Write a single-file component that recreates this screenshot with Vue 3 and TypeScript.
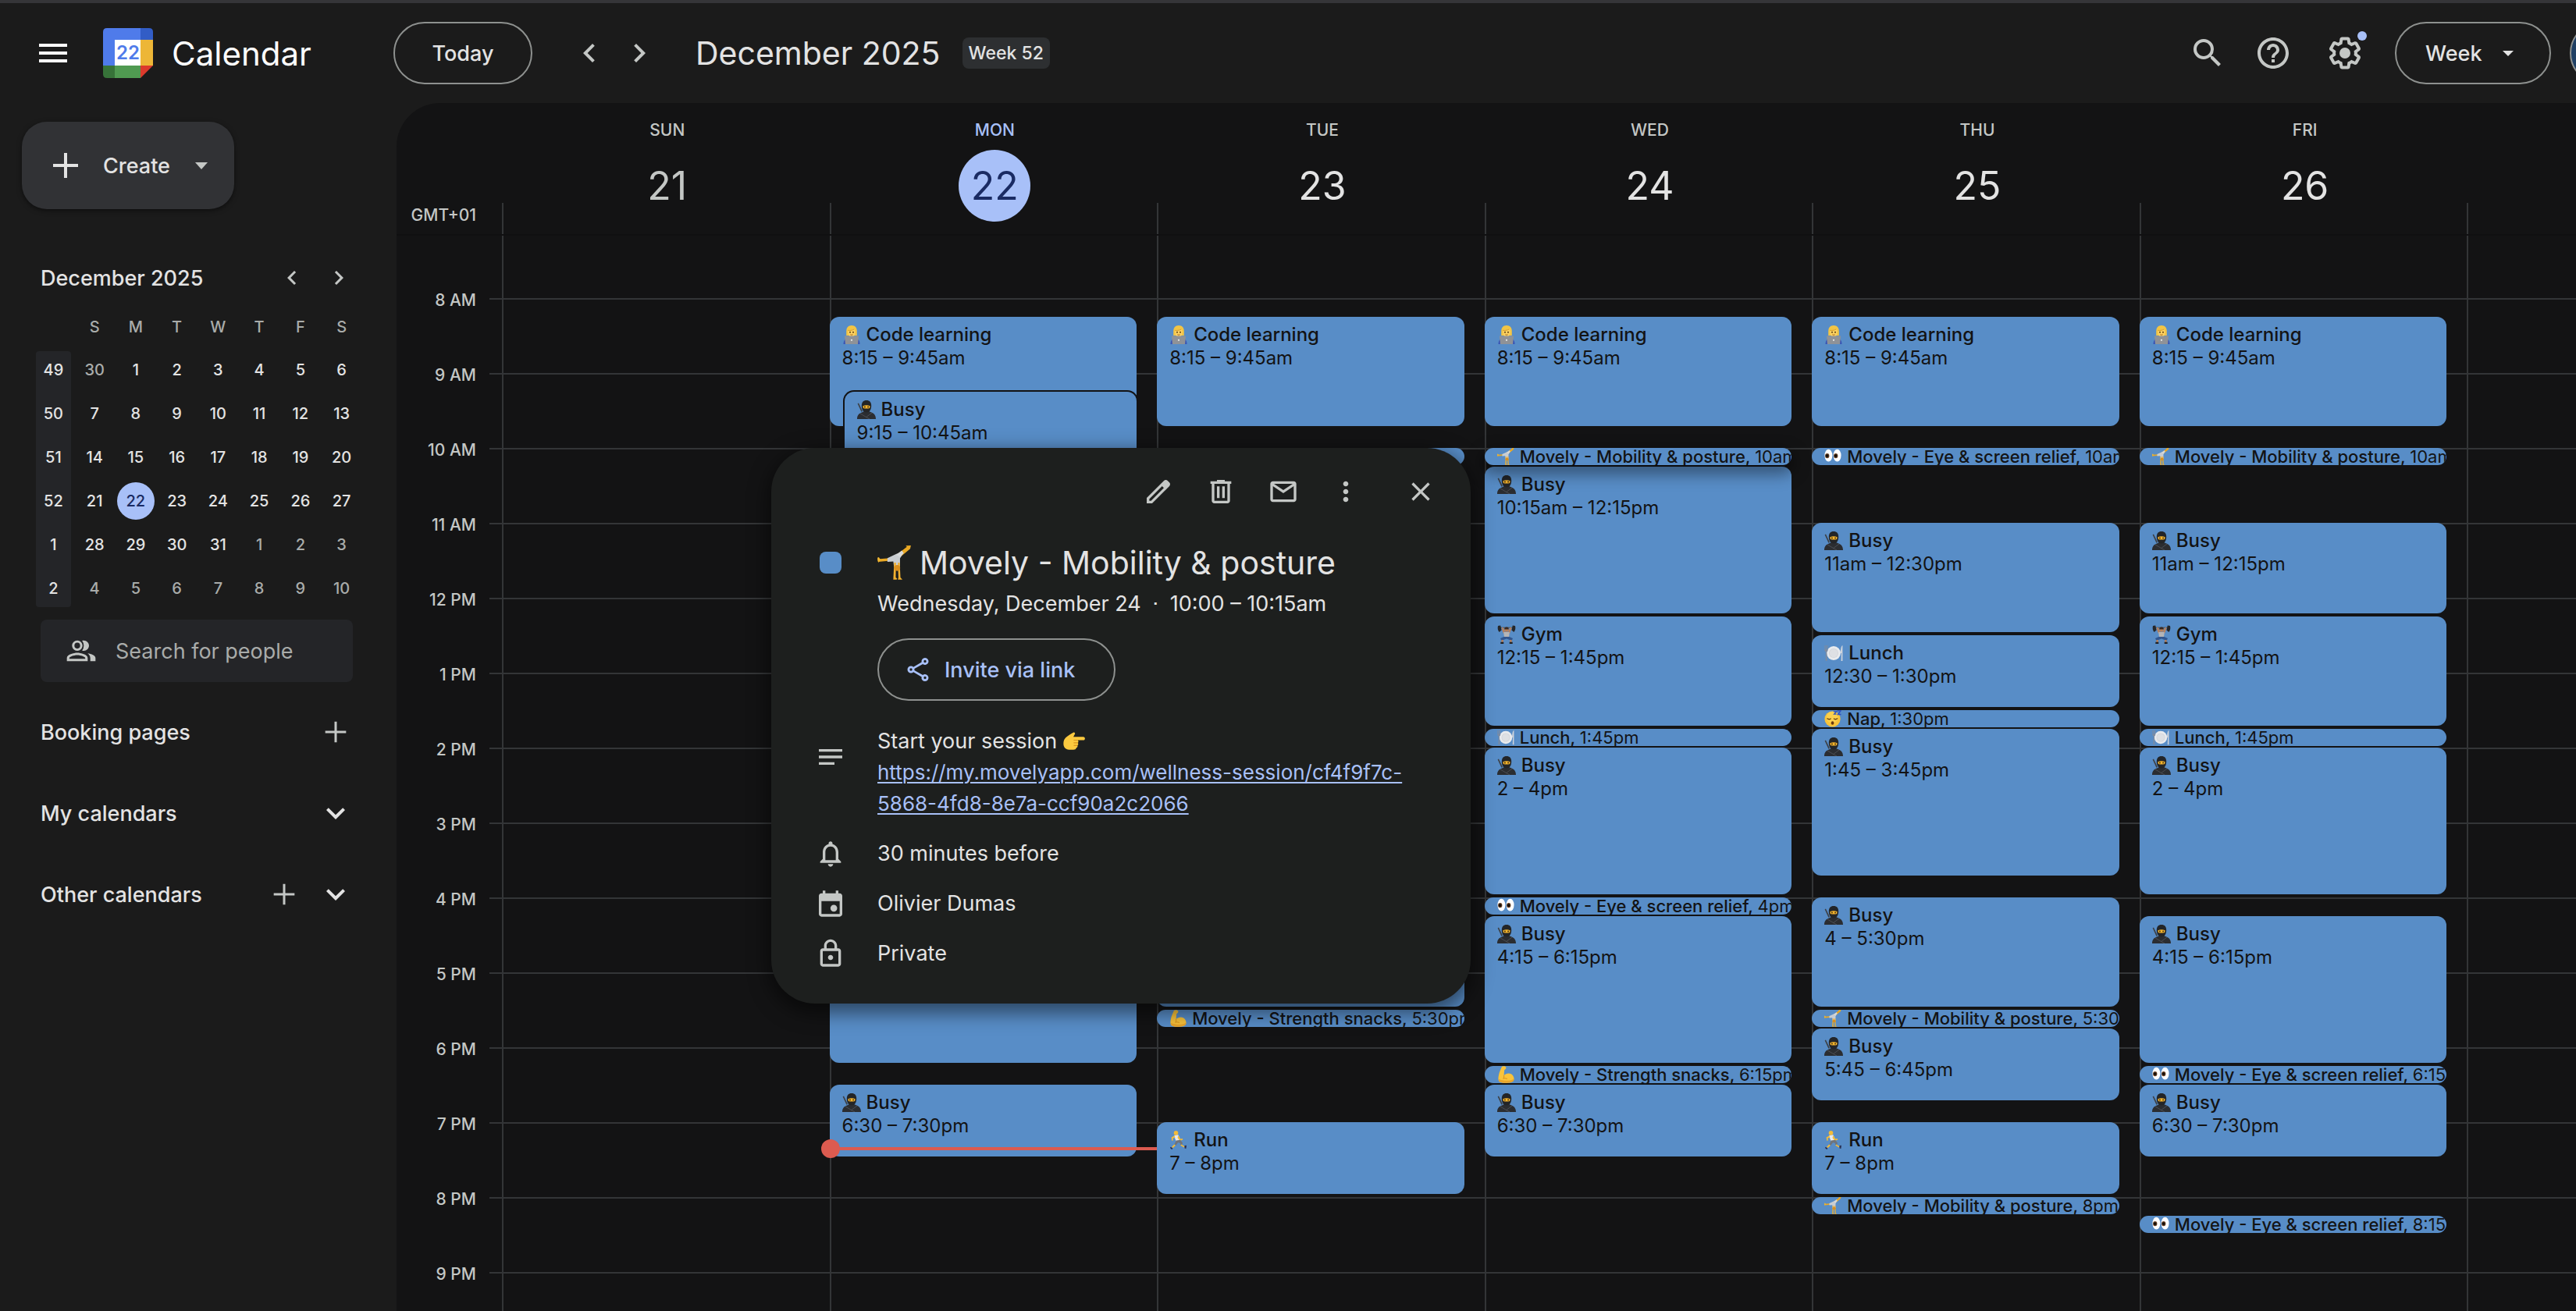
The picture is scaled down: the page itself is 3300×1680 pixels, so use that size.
<script setup lang="ts">
import { computed, ref } from 'vue'

interface CalEvent {
  icon: string
  title: string
  time: string
  start: number
  end: number
  nested?: boolean
  raised?: boolean
}

interface Day {
  name: string
  date: string
  today?: boolean
  past?: boolean
  events: CalEvent[]
}

const ev = (icon: string, title: string, time: string, start: number, end: number): CalEvent => ({
  icon, title, time, start, end,
})

const code = () => ev('coder', 'Code learning', '8:15 – 9:45am', 8.25, 9.75)
const busy = (time: string, start: number, end: number) => ev('ninja', 'Busy', time, start, end)
const brief = (icon: string, title: string, time: string, start: number) =>
  ev(icon, title, time, start, start + 0.25)
const mobility = (time: string, start: number) => brief('cartwheel', 'Movely - Mobility & posture', time, start)
const eyes = (time: string, start: number) => brief('eyes', 'Movely - Eye & screen relief', time, start)
const strength = (time: string, start: number) => brief('muscle', 'Movely - Strength snacks', time, start)

const days: Day[] = [
  { name: 'SUN', date: '21', past: true, events: [] },
  {
    name: 'MON', date: '22', today: true,
    events: [
      code(),
      { ...busy('9:15 – 10:45am', 9.25, 10.75), nested: true },
      ev('', '', '', 16.25, 18.25),
      busy('6:30 – 7:30pm', 18.5, 19.5),
    ],
  },
  {
    name: 'TUE', date: '23',
    events: [
      code(),
      ev('', '', '', 10, 10.25),
      ev('', '', '', 16, 17.5),
      strength('5:30pm', 17.5),
      ev('runner', 'Run', '7 – 8pm', 19, 20),
    ],
  },
  {
    name: 'WED', date: '24',
    events: [
      code(),
      busy('10:15am – 12:15pm', 10.25, 12.25),
      { ...mobility('10am', 10), raised: true },
      ev('lifter', 'Gym', '12:15 – 1:45pm', 12.25, 13.75),
      brief('plate', 'Lunch', '1:45pm', 13.75),
      busy('2 – 4pm', 14, 16),
      eyes('4pm', 16),
      busy('4:15 – 6:15pm', 16.25, 18.25),
      strength('6:15pm', 18.25),
      busy('6:30 – 7:30pm', 18.5, 19.5),
    ],
  },
  {
    name: 'THU', date: '25',
    events: [
      code(),
      eyes('10am', 10),
      busy('11am – 12:30pm', 11, 12.5),
      ev('plate', 'Lunch', '12:30 – 1:30pm', 12.5, 13.5),
      brief('sleepy', 'Nap', '1:30pm', 13.5),
      busy('1:45 – 3:45pm', 13.75, 15.75),
      busy('4 – 5:30pm', 16, 17.5),
      mobility('5:30pm', 17.5),
      busy('5:45 – 6:45pm', 17.75, 18.75),
      ev('runner', 'Run', '7 – 8pm', 19, 20),
      mobility('8pm', 20),
    ],
  },
  {
    name: 'FRI', date: '26',
    events: [
      code(),
      mobility('10am', 10),
      busy('11am – 12:15pm', 11, 12.25),
      ev('lifter', 'Gym', '12:15 – 1:45pm', 12.25, 13.75),
      brief('plate', 'Lunch', '1:45pm', 13.75),
      busy('2 – 4pm', 14, 16),
      busy('4:15 – 6:15pm', 16.25, 18.25),
      eyes('6:15pm', 18.25),
      busy('6:30 – 7:30pm', 18.5, 19.5),
      eyes('8:15pm', 20.25),
    ],
  },
  { name: '', date: '', events: [] },
]

const hours = ['8 AM', '9 AM', '10 AM', '11 AM', '12 PM', '1 PM', '2 PM', '3 PM', '4 PM', '5 PM', '6 PM', '7 PM', '8 PM', '9 PM']

// Row 1 is the strip before 8 AM; every row after it is a quarter of an hour.
const row = (t: number) => Math.round((t - 8) * 4) + 2
const place = (e: CalEvent) => ({ gridRow: `${row(e.start)} / ${row(e.end)}` })
const isBrief = (e: CalEvent) => e.end - e.start <= 0.25

const nowOffset = computed(() => Math.round((19.35 - 8) * 96) + 80)

const weekdays = ['S', 'M', 'T', 'W', 'T', 'F', 'S']
const weekNumbers = [49, 50, 51, 52, 1, 2]
const monthRows = weekNumbers.map((week, r) => ({
  week,
  cells: Array.from({ length: 7 }, (_, c) => {
    const n = r * 7 + c
    if (n === 0) return { day: 30, out: true, today: false }
    return n > 31 ? { day: n - 31, out: true, today: false } : { day: n, out: false, today: n === 22 }
  }),
}))

const view = ref('Week')
const popupOpen = ref(true)
const people = ref('')
</script>

<template>
  <div class="app">
    <svg class="sprite" aria-hidden="true">
      <symbol id="e-ninja" viewBox="0 0 24 24">
        <path d="M.6 4.2 2 3.4 7 14l-1.6.8z" fill="#3d4045" />
        <path d="M0 24c0-4 1.500-7 6-8.600L9 14h6l3.500 1.400C22.500 17 24 20 24 24z" fill="#2b2d31" />
        <path d="M12 0c4 0 6.200 2.600 6.200 7 0 5-2.600 8.500-6.200 8.500S5.800 12 5.800 7C5.800 2.600 8 0 12 0z" fill="#232528" />
        <path d="M7.400 7.200Q12 5.200 16.600 7.200L16.200 10Q12 11 7.800 10z" fill="#f6b52c" />
        <circle cx="9.900" cy="8.500" r=".9" fill="#3a2a14" /><circle cx="14.100" cy="8.500" r=".9" fill="#3a2a14" />
        <path d="M4 17l12 7M19 16l-8 6" stroke="#4b4e54" stroke-width="1" fill="none" />
      </symbol>
      <symbol id="e-coder" viewBox="0 0 24 24">
        <path d="M1.500 24c0-4 1.500-7 6-8h9c4.500 1 6 4 6 8z" fill="#3a56b5" />
        <path d="M12 0c4.500 0 6.800 3 6.800 7.500V13H5.200V7.500C5.200 3 7.500 0 12 0z" fill="#f2c545" />
        <path d="M7.400 6.200c3 .3 6-.2 7.800-1.400l1.400 2.400c0 5-1.600 8-4.600 8s-4.600-3-4.600-9z" fill="#fdd262" />
        <path d="M7.400 6.400c3 .3 6-.2 7.800-1.400" stroke="#c98f22" stroke-width=".8" fill="none" />
        <circle cx="10" cy="8.800" r="1" fill="#5a3d12" /><circle cx="14" cy="8.800" r="1" fill="#5a3d12" />
        <path d="M10.400 11.800q1.600.9 3.200 0" stroke="#a35a1a" stroke-width=".9" fill="none" />
        <path d="M3 13.600h18L20 24H4z" fill="#8f9297" />
        <circle cx="12" cy="18.800" r="1.100" fill="#eceef0" />
      </symbol>
      <symbol id="e-cartwheel" viewBox="0 0 24 24">
        <path d="M0 9.600l.5 1.800L9 10.600l3-2z" fill="#e9a824" />
        <path d="M0 8.600 1 8.200l1.200 1.700L.6 12z" fill="#f0b632" />
        <path d="M7 8.800 13 6l3.500-1.400 1 1.800L15.800 9v6h-4.200l-.5-3.800-4.100.2z" fill="#c9cdd1" />
        <path d="M13.500 6.400 20.600.9 19.800.2 23.400 0 22.900 2.300 17 7.200z" fill="#e9a824" />
        <path d="M13 6.600 17 3.600l1.400 1.700L16 8z" fill="#d6d9dc" />
        <path d="M11.700 12h1.300l-.2 10.400 1 .8-.4.600h-2.300zM15.600 12h-1.300l.4 10.400-.4 1.400h3.200l-1.400-1.400z" fill="#f0b030" />
        <circle cx="13.800" cy="15.700" r="2.100" fill="#d98f1e" />
      </symbol>
      <symbol id="e-lifter" viewBox="0 0 24 24">
        <path d="M3 3.200h18" stroke="#4a4d52" stroke-width="1" />
        <path d="M1 1 4.200.4l1.400 6L2.600 9C.8 7 .2 4 1 1zM23 1 19.800.4l-1.400 6L21.400 9c1.800-2 2.400-5 1.600-8z" fill="#25272a" />
        <path d="M5.500 3.500 7.500 2.800 10 9.500 8 11zM18.500 3.500l-2-.7L14 9.500l2 1.500z" fill="#b8805a" />
        <circle cx="12" cy="6" r="2.800" fill="#b8805a" /><path d="M9.200 5.400a2.800 2.800 0 0 1 5.600 0z" fill="#3b2a20" />
        <path d="M8.200 9h7.600l-.8 7H9z" fill="#b4b4b6" />
        <path d="M8.500 15h7l4.500 2-1.400 3-6.600-2.400L5.400 20 4 17z" fill="#31568f" />
        <path d="M5.400 19h2.400v3H5.400zM16.200 19h2.400v3h-2.400z" fill="#b8805a" />
        <path d="M4.300 21.800h4V24h-4zM15.700 21.800h4V24h-4z" fill="#202124" />
      </symbol>
      <symbol id="e-plate" viewBox="0 0 24 24">
        <circle cx="12" cy="12" r="9" fill="#e9ebee" /><circle cx="12" cy="12" r="6" fill="#d2d4d9" /><circle cx="12" cy="12" r="5.200" fill="#dee0e4" />
        <path d="M.4 2h1v5h.7V2h.9v5h.7V2h.9v6c0 1.400-.6 2-1.300 2.300L3.600 22H1.700L1.900 10.300C1 10 .4 9.400.4 8z" fill="#7d8ba0" />
        <path d="M23.400 2c-1.900 1-2.500 5-2.500 10h1L21.600 22h1.800z" fill="#cfd4dc" />
      </symbol>
      <symbol id="e-eyes" viewBox="0 0 24 24">
        <ellipse cx="5.900" cy="10.500" rx="5.400" ry="8.500" fill="#fff" /><ellipse cx="18.100" cy="10.500" rx="5.400" ry="8.500" fill="#fff" />
        <ellipse cx="4.100" cy="11" rx="2.900" ry="3.500" fill="#6b4326" /><ellipse cx="16.100" cy="11" rx="2.900" ry="3.500" fill="#6b4326" />
        <circle cx="4" cy="11" r="2.100" fill="#15100c" /><circle cx="16" cy="11" r="2.100" fill="#15100c" />
      </symbol>
      <symbol id="e-sleepy" viewBox="0 0 24 24">
        <circle cx="11.500" cy="12.500" r="11" fill="#f8c43a" /><circle cx="11" cy="10" r="8" fill="#fdd95a" opacity=".6" />
        <path d="M4.200 11.800q2.300 2 4.800.2M13.500 12q2.500 1.800 4.800-.2" stroke="#6b4210" stroke-width="1.400" fill="none" stroke-linecap="round" />
        <ellipse cx="11.500" cy="18" rx="2" ry="2.400" fill="#6b3a10" />
        <path d="M18 1h5l-4 5h4.500M13 2h4l-3.200 3.600H17" stroke="#2d4fc2" stroke-width="1.500" fill="none" />
      </symbol>
      <symbol id="e-muscle" viewBox="0 0 24 24">
        <path d="M6.500.8C8.500-.4 12 .2 12.400 2c.3 1.400-1.200 3-2.400 3.600l-.6 7.400c2.600-2.600 7-3.800 10.600-1.600 3.600 2.400 4.600 7.600 2 10.200C19.400 24 8.600 24.600 3.400 22 .4 20.400 1.600 14 3.200 8.600z" fill="#f9c33b" />
        <path d="M9.400 13c.4 2 .2 3-.6 4.400 2.400-.6 3.600-.4 5.200.8" stroke="#dc9720" stroke-width="1.200" fill="none" />
        <path d="M3.400 22c5.200 2.600 16 2 18.600-.4 1-1 1.500-2.400 1.500-4C20 21 10 21.500 2.200 18.600c.1 1.600.3 2.800 1.200 3.400z" fill="#e9a52b" />
      </symbol>
      <symbol id="e-runner" viewBox="0 0 24 24">
        <circle cx="8.500" cy="2.900" r="2.800" fill="#f2bb3a" />
        <path d="M5.800 6.200 11.500 5.200l2.600 6.800-5.300 1.800z" fill="#e6e9ed" />
        <path d="M6.500 6.200 2.600 8.500l.6 4.300 1.600-.2-.2-3L7.500 8.800zM11.500 6l2.800 4.600 2.600-.6.400 1.400-3.800 1.700L10.500 9z" fill="#f2bb3a" />
        <path d="M8.700 12.500l5.400-.7 3 4-1.400 3-1.700-.8.200-2-3-1L8.200 19l-2-1z" fill="#70747a" />
        <path d="M6.200 17.600 8 18.800 4.600 22 3 21zM15.200 17.500l4.500 2.500-.8 1.400-4.700-2.600z" fill="#f2bb3a" />
        <path d="M1 20.800 4.200 22 3.800 24 1.600 23zM19.400 19l2.600-.2-.6 4.200-1.800-.4z" fill="#2a2f52" />
      </symbol>
      <symbol id="e-point" viewBox="0 0 24 24">
        <path d="M3 8.500C6 6.500 9 4 11.500 3c1.600 0 1.900 1.600.9 2.600L11.200 8H22c2.500 0 2.500 3.600 0 3.600H15.500c1.500.6 1.600 2.200.5 2.900.9 1 .7 2.400-.4 2.900.5 1.200 0 2.400-1.300 2.700-.2 1.400-1.300 1.900-3 1.900H6.500C2.500 22 .3 18.900.3 15.400c0-2.800.7-5.200 2.700-6.900z" fill="#fbc93f" />
        <path d="M15.500 11.600h-4M16 14.500h-4.500M15.600 17.400h-4" stroke="#d9931d" stroke-width="1" />
      </symbol>
    </svg>

    <header class="topbar">
      <div class="brand">
        <button class="icon-btn" aria-label="Main menu">
          <svg class="i48 bright" viewBox="0 0 24 24"><path d="M3 18h18v-2H3v2zm0-5h18v-2H3v2zm0-7v2h18V6H3z" /></svg>
        </button>
        <span class="logo">
          <svg viewBox="0 0 64 64" aria-hidden="true">
            <path d="M5 0h43v15H15v33H0V5q0-5 5-5z" fill="#4f7bea" />
            <path d="M48 0h11q5 0 5 5v10H48z" fill="#325dc6" />
            <path d="M48 15h16v33H48z" fill="#edb637" />
            <path d="M15 48h33v16H15z" fill="#509a51" />
            <path d="M0 48h15v16H5q-5 0-5-5z" fill="#377339" />
            <path d="M48 48h16L48 64z" fill="#dc3a2c" />
            <path d="M15 15h33v33H15z" fill="#fff" />
          </svg>
          <span class="logo-day">22</span>
        </span>
        <span class="product">Calendar</span>
      </div>
      <button class="pill today-btn">Today</button>
      <div class="pager">
        <button class="icon-btn" aria-label="Previous week">
          <svg class="i48" viewBox="0 0 24 24"><path d="M15.410 7.410 14 6l-6 6 6 6 1.410-1.410L10.830 12z" /></svg>
        </button>
        <button class="icon-btn" aria-label="Next week">
          <svg class="i48" viewBox="0 0 24 24"><path d="M10 6 8.590 7.410 13.170 12l-4.580 4.590L10 18l6-6z" /></svg>
        </button>
      </div>
      <h1>December 2025</h1>
      <span class="chip">Week 52</span>
      <div class="tools">
        <button class="icon-btn" aria-label="Search">
          <svg class="i48" viewBox="0 0 24 24"><path d="M15.500 14h-.79l-.28-.27A6.470 6.470 0 0 0 16 9.500 6.500 6.500 0 1 0 9.500 16c1.610 0 3.090-.59 4.230-1.570l.27.28v.79l5 4.990L20.490 19l-4.990-5zm-6 0C7.010 14 5 11.990 5 9.500S7.010 5 9.500 5 14 7.010 14 9.500 11.990 14 9.500 14z" /></svg>
        </button>
        <button class="icon-btn" aria-label="Help">
          <svg class="i48" viewBox="0 0 24 24"><path d="M11 18h2v-2h-2v2zm1-16C6.480 2 2 6.480 2 12s4.480 10 10 10 10-4.480 10-10S17.520 2 12 2zm0 18c-4.410 0-8-3.590-8-8s3.590-8 8-8 8 3.590 8 8-3.590 8-8 8zm0-14c-2.210 0-4 1.790-4 4h2c0-1.100.9-2 2-2s2 .9 2 2c0 2-3 1.750-3 5h2c0-2.250 3-2.500 3-5 0-2.210-1.790-4-4-4z" /></svg>
        </button>
        <button class="icon-btn settings" aria-label="Settings">
          <svg class="i48" viewBox="0 0 24 24">
            <path d="M13.850 22.250h-3.700c-.74 0-1.360-.54-1.450-1.270l-.27-1.890c-.27-.14-.53-.29-.79-.46l-1.800.72c-.7.26-1.470-.03-1.810-.65L2.200 15.530c-.35-.66-.2-1.440.36-1.880l1.530-1.190c-.01-.15-.02-.3-.02-.46 0-.15.010-.31.020-.46l-1.520-1.190c-.59-.45-.74-1.260-.37-1.880l1.850-3.190c.34-.62 1.110-.9 1.790-.63l1.810.73c.26-.17.52-.32.78-.46l.27-1.910c.09-.7.71-1.250 1.440-1.250h3.700c.74 0 1.360.54 1.450 1.270l.27 1.890c.27.14.53.29.79.46l1.800-.72c.71-.26 1.480.03 1.820.65l1.840 3.180c.36.66.2 1.440-.36 1.880l-1.520 1.190c.01.15.02.3.02.46s-.01.31-.02.46l1.520 1.190c.56.45.72 1.230.37 1.860l-1.860 3.220c-.34.62-1.110.9-1.800.63l-1.800-.72c-.26.17-.52.32-.78.46l-.27 1.910c-.1.680-.72 1.220-1.460 1.220zm-3.230-2h2.760l.37-2.550.53-.22c.44-.18.88-.44 1.340-.78l.45-.34 2.380.96 1.380-2.400-2.030-1.580.07-.56c.03-.26.06-.51.06-.78s-.03-.53-.06-.78l-.07-.56 2.030-1.580-1.390-2.400-2.390.96-.45-.35c-.42-.32-.87-.58-1.330-.77l-.52-.22-.37-2.550h-2.760l-.37 2.550-.53.21c-.44.19-.88.44-1.340.79l-.45.33-2.380-.95-1.390 2.390 2.030 1.580-.07.56a7 7 0 0 0-.06.79c0 .26.02.53.06.78l.07.56-2.030 1.580 1.380 2.400 2.390-.96.45.35c.43.33.86.58 1.330.77l.53.22.38 2.550z" />
            <circle cx="12" cy="12" r="3.500" />
          </svg>
          <i class="badge"></i>
        </button>
      </div>
      <div class="view-picker">
        <select v-model="view" class="pill" aria-label="View">
          <option>Week</option>
        </select>
        <svg viewBox="0 0 14 7" aria-hidden="true"><path d="M0 0h14L7 7z" /></svg>
      </div>
      <button class="switch" aria-label="Switch to Tasks"></button>
    </header>

    <aside class="sidebar">
      <button class="create">
        <svg class="i48 soft" viewBox="0 0 24 24"><path d="M20 13h-7v7h-2v-7H4v-2h7V4h2v7h7v2z" /></svg>
        <span>Create</span>
        <svg class="caret" viewBox="0 0 16 9"><path d="M0 0h16L8 9z" /></svg>
      </button>

      <div class="mini-head">
        <h2>December 2025</h2>
        <button class="icon-btn" aria-label="Previous month">
          <svg class="i36" viewBox="0 0 24 24"><path d="M15.410 7.410 14 6l-6 6 6 6 1.410-1.410L10.830 12z" /></svg>
        </button>
        <button class="icon-btn" aria-label="Next month">
          <svg class="i36" viewBox="0 0 24 24"><path d="M10 6 8.590 7.410 13.170 12l-4.580 4.590L10 18l6-6z" /></svg>
        </button>
      </div>
      <table class="mini">
        <thead>
          <tr><th></th><th v-for="(d, i) in weekdays" :key="i" scope="col">{{ d }}</th></tr>
        </thead>
        <tbody>
          <tr v-for="r in monthRows" :key="r.week">
            <th scope="row"><span class="week-no">{{ r.week }}</span></th>
            <td v-for="(c, i) in r.cells" :key="i" :class="{ out: c.out }">
              <span :class="{ current: c.today }">{{ c.day }}</span>
            </td>
          </tr>
        </tbody>
      </table>

      <label class="people">
        <svg class="i40" viewBox="0 0 24 24"><path d="M9 12c2.200 0 4-1.800 4-4s-1.800-4-4-4-4 1.800-4 4 1.800 4 4 4zm0-6.300a2.200 2.300 0 1 1 0 4.600 2.200 2.300 0 0 1 0-4.600zM9 13.500c-2.700 0-8 1.300-8 4V20h16v-2.500c0-2.700-5.300-4-8-4zM2.900 18.100v-.6c0-.8 3.200-2.200 6.100-2.200s6.100 1.400 6.100 2.200v.6zM14 4c-.5 0-.9.1-1.300.2A6 6 0 0 1 14 8a6 6 0 0 1-1.300 3.800c.4.1.8.2 1.300.2 2.200 0 4-1.800 4-4s-1.800-4-4-4zM17 13.900c1.200.9 2 2.100 2 3.600V20h4v-2.500c0-2-3.200-3.200-6-3.600z" /></svg>
        <input v-model="people" type="text" placeholder="Search for people" aria-label="Search for people" />
      </label>

      <section class="fold">
        <h3>Booking pages</h3>
        <button class="icon-btn" aria-label="Create booking page">
          <svg class="i40" viewBox="0 0 24 24"><path d="M20 12.900h-7.100V20h-1.800v-7.100H4v-1.800h7.100V4h1.800v7.100H20z" /></svg>
        </button>
      </section>
      <section class="fold">
        <h3>My calendars</h3>
        <button class="icon-btn" aria-label="Show my calendars">
          <svg class="i48 soft" viewBox="0 0 24 24"><path d="M16.590 8.590 12 13.170 7.410 8.590 6 10l6 6 6-6z" /></svg>
        </button>
      </section>
      <section class="fold">
        <h3>Other calendars</h3>
        <button class="icon-btn" aria-label="Add other calendars">
          <svg class="i40" viewBox="0 0 24 24"><path d="M20 12.900h-7.100V20h-1.800v-7.100H4v-1.800h7.100V4h1.800v7.100H20z" /></svg>
        </button>
        <button class="icon-btn" aria-label="Show other calendars">
          <svg class="i48 soft" viewBox="0 0 24 24"><path d="M16.590 8.590 12 13.170 7.410 8.590 6 10l6 6 6-6z" /></svg>
        </button>
      </section>
    </aside>

    <main class="board">
      <div class="day-heads">
        <span class="zone">GMT+01</span>
        <div class="cols">
          <div v-for="(d, i) in days" :key="i" class="head" :class="{ today: d.today, past: d.past }">
            <span class="dow">{{ d.name }}</span>
            <span class="num">{{ d.date }}</span>
          </div>
        </div>
      </div>
      <div class="body">
        <div class="gutter">
          <div class="labels"><span v-for="h in hours" :key="h">{{ h }}</span></div>
          <div class="ticks"></div>
        </div>
        <div class="cols">
          <div v-for="(d, i) in days" :key="i" class="day">
            <article
              v-for="(e, k) in d.events"
              :key="k"
              class="event"
              :class="{ brief: isBrief(e), nested: e.nested, raised: e.raised }"
              :style="place(e)"
            >
              <p v-if="e.title" class="what">
                <svg><use :href="'#e-' + e.icon" /></svg>
                <b>{{ e.title }}<template v-if="isBrief(e)">, <span>{{ e.time }}</span></template></b>
              </p>
              <p v-if="e.title && !isBrief(e)" class="when">{{ e.time }}</p>
            </article>
            <div v-if="d.today" class="now" :style="{ top: nowOffset + 'px' }"></div>
          </div>
        </div>
      </div>

      <section v-if="popupOpen" class="popup" role="dialog" aria-labelledby="popup-title">
        <div class="popup-tools">
          <button class="icon-btn" aria-label="Edit event">
            <svg class="i40" viewBox="0 0 24 24"><path d="M20.410 4.940l-1.350-1.350c-.78-.78-2.050-.78-2.830 0L3 16.820V21h4.180L20.410 7.770c.79-.78.79-2.050 0-2.830zM6.340 19H5v-1.340l9.840-9.830 1.330 1.330z" /></svg>
          </button>
          <button class="icon-btn" aria-label="Delete event">
            <svg class="i40" viewBox="0 0 24 24"><path d="M15 4V3H9v1H4v2h1v13c0 1.100.9 2 2 2h10c1.100 0 2-.9 2-2V6h1V4h-5zm2 15H7V6h10v13zM9 8h2v9H9zm4 0h2v9h-2z" /></svg>
          </button>
          <button class="icon-btn" aria-label="Email event">
            <svg class="i40" viewBox="0 0 24 24"><path d="M20 4H4c-1.100 0-2 .9-2 2v12c0 1.100.9 2 2 2h16c1.100 0 2-.9 2-2V6c0-1.100-.9-2-2-2zm-.8 2L12 10.800 4.800 6zM4 18V7.870l8 5.330 8-5.330V18z" /></svg>
          </button>
          <button class="icon-btn" aria-label="Options">
            <svg class="i40" viewBox="0 0 24 24"><path d="M12 8c1.100 0 2-.9 2-2s-.9-2-2-2-2 .9-2 2 .9 2 2 2zm0 2c-1.100 0-2 .9-2 2s.9 2 2 2 2-.9 2-2-.9-2-2-2zm0 6c-1.100 0-2 .9-2 2s.9 2 2 2 2-.9 2-2-.9-2-2-2z" /></svg>
          </button>
          <button class="icon-btn close" aria-label="Close" @click="popupOpen = false">
            <svg class="i40" viewBox="0 0 24 24"><path d="M19 6.410 17.590 5 12 10.590 6.410 5 5 6.410 10.590 12 5 17.590 6.410 19 12 13.410 17.590 19 19 17.590 13.410 12z" /></svg>
          </button>
        </div>

        <div class="line headline">
          <span class="mark"><i class="swatch"></i></span>
          <h2 id="popup-title"><svg><use href="#e-cartwheel" /></svg>Movely - Mobility &amp; posture</h2>
        </div>
        <p class="date">
          <span>Wednesday, December 24</span><span>⋅</span><span>10:00 – 10:15am</span>
        </p>
        <button class="pill invite">
          <svg class="i36" viewBox="0 0 24 24"><path d="M18 2a3 3 0 0 0-2.920 3.700L8.100 9.860a3 3 0 1 0 0 4.280l6.980 4.160A3 3 0 1 0 16.100 16.700L8.920 12.700a3 3 0 0 0 0-1.400L16.100 7.300A3 3 0 1 0 18 2zm0 1.900a1.100 1.100 0 1 1 0 2.200 1.100 1.100 0 0 1 0-2.200zM6 10.900a1.100 1.100 0 1 1 0 2.200 1.100 1.100 0 0 1 0-2.200zm12 7a1.100 1.100 0 1 1 0 2.200 1.100 1.100 0 0 1 0-2.200z" /></svg>
          Invite via link
        </button>
        <div class="line about">
          <span class="mark"><svg class="i40" viewBox="0 0 24 24"><path d="M3 18h12v-2H3v2zM3 6v2h18V6H3zm0 7h18v-2H3v2z" /></svg></span>
          <p>
            Start your session <svg class="point"><use href="#e-point" /></svg><br />
            <a href="https://my.movelyapp.com/wellness-session/cf4f9f7c-5868-4fd8-8e7a-ccf90a2c2066">https://my.movelyapp.com/wellness-session/cf4f9f7c-<wbr />5868-4fd8-8e7a-ccf90a2c2066</a>
          </p>
        </div>
        <div class="line fact">
          <span class="mark"><svg class="i40" viewBox="0 0 24 24"><path d="M12 22c1.100 0 2-.9 2-2h-4c0 1.100.9 2 2 2zm6-6v-5c0-3.070-1.630-5.640-4.500-6.320V4c0-.83-.67-1.500-1.500-1.500s-1.500.67-1.500 1.500v.68C7.640 5.360 6 7.920 6 11v5l-2 2v1h16v-1l-2-2zm-2 1H8v-6c0-2.480 1.510-4.500 4-4.500s4 2.020 4 4.500v6z" /></svg></span>
          <p>30 minutes before</p>
        </div>
        <div class="line fact">
          <span class="mark"><svg class="i40" viewBox="0 0 24 24"><path d="M19 4h-1V2h-2v2H8V2H6v2H5c-1.110 0-2 .9-2 2v14c0 1.100.89 2 2 2h14c1.100 0 2-.9 2-2V6c0-1.100-.9-2-2-2zm0 16H5V10h14v10z" /><circle cx="14.500" cy="15.500" r="2.600" /></svg></span>
          <p>Olivier Dumas</p>
        </div>
        <div class="line fact">
          <span class="mark"><svg class="i40" viewBox="0 0 24 24"><path d="M18 8h-1V6c0-2.760-2.240-5-5-5S7 3.240 7 6v2H6c-1.100 0-2 .9-2 2v10c0 1.100.9 2 2 2h12c1.100 0 2-.9 2-2V10c0-1.100-.9-2-2-2zM9 6c0-1.660 1.340-3 3-3s3 1.340 3 3v2H9V6zm9 14H6V10h12v10zm-6-3c1.100 0 2-.9 2-2s-.9-2-2-2-2 .9-2 2 .9 2 2 2z" /></svg></span>
          <p>Private</p>
        </div>
      </section>
    </main>
  </div>
</template>

<style>
html,
body {
  margin: 0;
  background: #1b1b1b;
}
</style>

<style scoped>
.app {
  --text: #e3e3e3;
  --muted: #c4c7c5;
  --line: #333537;
  --accent: #a8c0f8;
  --event: #588dc7;
  display: grid;
  grid-template: 132px minmax(0, 1fr) / 508px minmax(0, 1fr);
  height: 100vh;
  overflow: hidden;
  background: #1b1b1b;
  color: var(--text);
  font-family: Inter, 'Liberation Sans', sans-serif;
  font-size: 27px;
}
.app * { box-sizing: border-box; }
.sprite { position: absolute; width: 0; height: 0; }
h1, h2, h3, p { margin: 0; font-weight: 400; }
button, select, input { font: inherit; color: inherit; background: none; border: 0; padding: 0; margin: 0; }
svg { display: block; flex: none; fill: var(--muted); }
.i48 { width: 48px; height: 48px; }
.i40 { width: 40px; height: 40px; }
.i36 { width: 36px; height: 36px; }
.bright { fill: #fff; }
.soft { fill: var(--text); }
.icon-btn { display: flex; align-items: center; justify-content: center; flex: none; }
.pill { height: 80px; border: 2px solid #8e918f; border-radius: 40px; font-weight: 500; }

.topbar {
  grid-column: 1 / -1;
  display: flex;
  align-items: center;
  border-top: 4px solid #353538;
  padding-left: 44px;
  overflow: hidden;
}
.brand { display: flex; align-items: center; width: 460px; flex: none; }
.logo { position: relative; width: 64px; height: 64px; margin: 0 24px 0 40px; }
.logo svg { width: 64px; height: 64px; }
.logo-day { position: absolute; inset: 0; line-height: 63px; text-align: center; font-size: 24px; font-weight: 600; color: #4f7bea; }
.product { font-size: 42px; color: #fff; }
.today-btn { width: 178px; flex: none; }
.pager { display: flex; gap: 16px; margin-left: 49px; flex: none; }
h1 { font-size: 41px; margin-left: 48px; white-space: nowrap; }
.chip { margin-left: 28px; padding: 0 8px; height: 40px; line-height: 40px; border-radius: 8px; background: #2d2f31; font-size: 23px; font-weight: 500; white-space: nowrap; }
.tools { display: flex; gap: 36px; margin-left: auto; }
.settings { position: relative; margin-left: 8px; }
.badge { position: absolute; top: -4px; right: -4px; width: 12px; height: 12px; border-radius: 50%; background: var(--accent); }
.view-picker { position: relative; margin: 0 24px 0 40px; flex: none; }
.view-picker select { width: 200px; padding-left: 37px; appearance: none; display: block; }
.view-picker svg { position: absolute; right: 48px; top: 37px; width: 14px; height: 7px; fill: var(--text); }
.switch { width: 80px; height: 80px; margin-right: -72px; flex: none; border: 2px solid #8e918f; border-radius: 50%; background: #1f3f63; }

.sidebar { padding: 24px 44px 0 52px; }
.create {
  display: flex;
  align-items: center;
  width: 272px;
  height: 112px;
  margin-left: -24px;
  padding-left: 32px;
  border-radius: 32px;
  background: #313235;
  box-shadow: 0 2px 6px rgba(0, 0, 0, 0.5);
  font-weight: 500;
}
.create span { margin: 0 32px 0 24px; }
.caret { width: 16px; height: 9px; }
.mini-head { display: flex; align-items: center; gap: 24px; height: 56px; margin-top: 60px; padding-right: 12px; }
.mini-head h2 { font-size: 27px; font-weight: 500; margin-right: auto; }
.mini { width: 422px; margin: 8px 0 0 -10px; border-collapse: collapse; table-layout: fixed; font-size: 20px; font-weight: 500; }
.mini th, .mini td { height: 56px; padding: 0; text-align: center; font-weight: 500; }
.mini thead th, .mini .out { color: #a9acaa; }
.mini thead th { height: 54px; }
.mini span { display: block; width: 48px; height: 48px; line-height: 48px; margin: 0 auto; border-radius: 50%; }
.mini .week-no { width: 45px; height: 56px; line-height: 56px; border-radius: 0; background: #242528; }
.mini tbody tr:first-child .week-no { height: 52px; line-height: 48px; margin-top: 4px; border-radius: 4px 4px 0 0; }
.mini tbody tr:last-child .week-no { height: 52px; margin-bottom: 4px; border-radius: 0 0 4px 4px; }
.mini .current { background: var(--accent); color: #1a2b63; }
.people { display: flex; align-items: center; gap: 24px; width: 400px; height: 80px; margin-top: 12px; padding-left: 32px; border-radius: 8px; background: #242528; }
.people input { width: 100%; min-width: 0; outline: 0; }
.people input::placeholder { color: #a9acaa; opacity: 1; }
.fold { display: flex; align-items: center; gap: 22px; height: 104px; padding-right: 12px; }
.people + .fold { margin-top: 12px; }
.fold .icon-btn { width: 44px; }
.fold h3 { font-size: 27px; font-weight: 500; margin-right: auto; }

.board { position: relative; display: flex; flex-direction: column; min-height: 0; overflow: hidden; border-radius: 56px 0 0 0; background: #131314; }
.day-heads { display: flex; height: 168px; flex: none; }
.zone { width: 135px; flex: none; padding: 131px 33px 0 0; text-align: right; font-size: 21px; line-height: 26px; font-weight: 500; color: var(--muted); }
.cols { display: grid; grid-template-columns: repeat(7, minmax(0, 1fr)); width: calc(100% + 145px); flex: none; }
.head {
  display: flex;
  flex-direction: column;
  align-items: center;
  padding: 22px 0 0 4px;
  background: linear-gradient(var(--line), var(--line)) left bottom / 2px 40px no-repeat;
}
.dow { height: 26px; line-height: 26px; font-size: 21px; font-weight: 500; color: var(--muted); }
.num { width: 92px; height: 92px; margin-top: 12px; line-height: 92px; text-align: center; border-radius: 50%; font-size: 50px; }
.past .num { color: var(--muted); }
.today .dow { color: var(--accent); }
.today .num { background: var(--accent); color: #1a2b63; }

.body { display: flex; flex: 1; min-height: 0; overflow: hidden; border-top: 2px solid #101011; }
.gutter { display: flex; width: 135px; flex: none; }
.labels { width: 102px; padding-top: 35px; text-align: right; font-size: 21px; font-weight: 500; color: var(--muted); }
.labels span { display: block; height: 96px; line-height: 96px; }
.ticks { width: 16px; margin-left: auto; }
.ticks, .day { background: linear-gradient(var(--line) 2px, transparent 2px) 0 -16px / 100% 96px; }
.day { position: relative; display: grid; grid-template-columns: minmax(0, 1fr); grid-template-rows: 80px repeat(56, 24px); border-left: 2px solid var(--line); }
.event {
  grid-column: 1;
  margin: 0 26px 4px -2px;
  padding: 8px 0 0 16px;
  overflow: hidden;
  border-radius: 12px;
  background: var(--event);
  color: #131314;
  font-size: 24px;
  line-height: 30px;
  white-space: nowrap;
}
.event b { font-weight: 500; }
.event b span { font-weight: 400; }
.what { display: flex; align-items: center; gap: 7px; }
.what svg { width: 24px; height: 24px; }
.brief { margin-bottom: 2px; padding-top: 0; font-size: 22px; line-height: 22px; }
.brief .what svg { width: 22px; height: 22px; }
.nested { margin-left: 17px; box-shadow: 0 0 0 2px #131314; }
.raised { z-index: 1; box-shadow: 0 8px 20px 4px rgba(0, 0, 0, 0.4); }
.now { position: absolute; left: -2px; right: 0; height: 4px; margin-top: -2px; background: #dc5b50; }
.now::before { content: ''; position: absolute; left: -11px; top: -10px; width: 24px; height: 24px; border-radius: 50%; background: #dc5b50; }

.popup {
  position: absolute;
  z-index: 2;
  left: 480px;
  top: 442px;
  width: 896px;
  padding: 36px 44px 32px 56px;
  border-radius: 56px;
  background: #1d1f1e;
  box-shadow: 0 8px 24px 4px rgba(0, 0, 0, 0.5);
}
.popup-tools { display: flex; justify-content: flex-end; gap: 40px; }
.popup-tools .close { margin-left: 16px; }
.line { display: flex; }
.mark { display: flex; width: 40px; margin-right: 40px; flex: none; justify-content: center; align-items: center; }
.headline { margin-top: 43px; height: 56px; align-items: center; }
.swatch { width: 28px; height: 28px; border-radius: 8px; background: var(--event); }
.popup h2 { display: flex; align-items: center; gap: 10px; font-size: 41px; white-space: nowrap; }
.popup h2 svg { width: 44px; height: 44px; }
.date { display: flex; gap: 14px; margin: 5px 0 24px 80px; line-height: 40px; white-space: nowrap; }
.invite { display: flex; align-items: center; gap: 16px; margin-left: 80px; padding: 0 50px 0 32px; color: var(--accent); white-space: nowrap; }
.invite svg { fill: var(--accent); }
.about { margin-top: 32px; line-height: 40px; }
.about .mark { height: 80px; }
.about a { font-size: 26px; color: var(--accent); text-underline-offset: 3px; text-decoration-thickness: 2px; }
.point { display: inline-block; width: 28px; height: 28px; vertical-align: -4px; }
.fact { height: 64px; line-height: 64px; }
.about + .fact { margin-top: 12px; }
</style>
